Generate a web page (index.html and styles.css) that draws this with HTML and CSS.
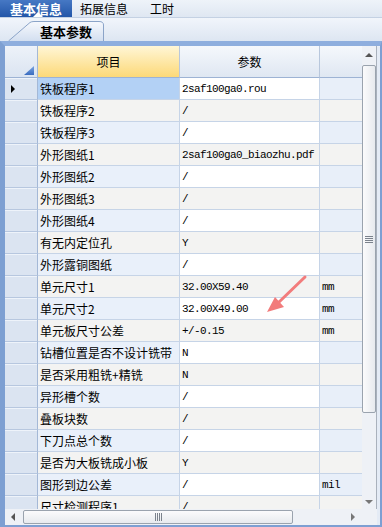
FILE: index.html
```html
<!DOCTYPE html>
<html lang="zh-CN">
<head>
<meta charset="UTF-8">
<meta name="viewport" content="width=device-width, initial-scale=1.0">
<title>基本信息</title>
<link rel="stylesheet" href="styles.css">
</head>
<body>

<div class="app">
    <div class="tabs">
        <div class="tab active">基本信息</div>
        <div class="tab second">拓展信息</div>
        <div class="tab third">工时</div>
    </div>

    <div class="subtabs">
        <div class="subtab">
            <svg class="subtab-shape" width="96" height="20" viewBox="0 0 96 20">
                <defs>
                    <linearGradient id="tabFill" x1="0" y1="0" x2="0" y2="1">
                        <stop offset="0" stop-color="#f7f9fd"/>
                        <stop offset="1" stop-color="#d3dff0"/>
                    </linearGradient>
                </defs>
                <path d="M0.5 20 L22 1.5 Q23.5 0.5 26 0.5 L91 0.5 Q95.5 0.5 95.5 4 L95.5 20" fill="url(#tabFill)" stroke="#8ba4c8"/>
            </svg>
            <span class="subtab-label">基本参数</span>
        </div>
    </div>

    <div class="frame">
        <div class="frame-body">
            <div class="grid">
                <div class="row head">
                    <div class="cell rh corner"></div>
                    <div class="cell hd active-col">项目</div>
                    <div class="cell hd">参数</div>
                    <div class="cell hd last"></div>
                </div>
                <div class="row even current">
                    <div class="cell rh"><span class="pointer"></span></div>
                    <div class="cell name">铁板程序1</div>
                    <div class="cell val">2saf100ga0.rou</div>
                    <div class="cell unit"></div>
                </div>
                <div class="row odd">
                    <div class="cell rh"></div>
                    <div class="cell name">铁板程序2</div>
                    <div class="cell val">/</div>
                    <div class="cell unit"></div>
                </div>
                <div class="row even">
                    <div class="cell rh"></div>
                    <div class="cell name">铁板程序3</div>
                    <div class="cell val">/</div>
                    <div class="cell unit"></div>
                </div>
                <div class="row odd">
                    <div class="cell rh"></div>
                    <div class="cell name">外形图纸1</div>
                    <div class="cell val">2saf100ga0_biaozhu.pdf</div>
                    <div class="cell unit"></div>
                </div>
                <div class="row even">
                    <div class="cell rh"></div>
                    <div class="cell name">外形图纸2</div>
                    <div class="cell val">/</div>
                    <div class="cell unit"></div>
                </div>
                <div class="row odd">
                    <div class="cell rh"></div>
                    <div class="cell name">外形图纸3</div>
                    <div class="cell val">/</div>
                    <div class="cell unit"></div>
                </div>
                <div class="row even">
                    <div class="cell rh"></div>
                    <div class="cell name">外形图纸4</div>
                    <div class="cell val">/</div>
                    <div class="cell unit"></div>
                </div>
                <div class="row odd">
                    <div class="cell rh"></div>
                    <div class="cell name">有无内定位孔</div>
                    <div class="cell val">Y</div>
                    <div class="cell unit"></div>
                </div>
                <div class="row even">
                    <div class="cell rh"></div>
                    <div class="cell name">外形露铜图纸</div>
                    <div class="cell val">/</div>
                    <div class="cell unit"></div>
                </div>
                <div class="row odd">
                    <div class="cell rh"></div>
                    <div class="cell name">单元尺寸1</div>
                    <div class="cell val">32.00X59.40</div>
                    <div class="cell unit">mm</div>
                </div>
                <div class="row even">
                    <div class="cell rh"></div>
                    <div class="cell name">单元尺寸2</div>
                    <div class="cell val">32.00X49.00</div>
                    <div class="cell unit">mm</div>
                </div>
                <div class="row odd">
                    <div class="cell rh"></div>
                    <div class="cell name">单元板尺寸公差</div>
                    <div class="cell val">+/-0.15</div>
                    <div class="cell unit">mm</div>
                </div>
                <div class="row even">
                    <div class="cell rh"></div>
                    <div class="cell name">钻槽位置是否不设计铣带</div>
                    <div class="cell val">N</div>
                    <div class="cell unit"></div>
                </div>
                <div class="row odd">
                    <div class="cell rh"></div>
                    <div class="cell name">是否采用粗铣+精铣</div>
                    <div class="cell val">N</div>
                    <div class="cell unit"></div>
                </div>
                <div class="row even">
                    <div class="cell rh"></div>
                    <div class="cell name">异形槽个数</div>
                    <div class="cell val">/</div>
                    <div class="cell unit"></div>
                </div>
                <div class="row odd">
                    <div class="cell rh"></div>
                    <div class="cell name">叠板块数</div>
                    <div class="cell val">/</div>
                    <div class="cell unit"></div>
                </div>
                <div class="row even">
                    <div class="cell rh"></div>
                    <div class="cell name">下刀点总个数</div>
                    <div class="cell val">/</div>
                    <div class="cell unit"></div>
                </div>
                <div class="row odd">
                    <div class="cell rh"></div>
                    <div class="cell name">是否为大板铣成小板</div>
                    <div class="cell val">Y</div>
                    <div class="cell unit"></div>
                </div>
                <div class="row even">
                    <div class="cell rh"></div>
                    <div class="cell name">图形到边公差</div>
                    <div class="cell val">/</div>
                    <div class="cell unit">mil</div>
                </div>
                <div class="row odd">
                    <div class="cell rh"></div>
                    <div class="cell name">尺寸检测程序1</div>
                    <div class="cell val">/</div>
                    <div class="cell unit"></div>
                </div>
            </div>

            <div class="vscroll">
                <div class="sb-btn"><span class="arrow-up"></span></div>
                <div class="sb-thumb v"><span class="grip-v"></span></div>
                <div class="sb-track"></div>
                <div class="sb-btn"><span class="arrow-down"></span></div>
            </div>
        </div>

        <div class="frame-foot">
            <div class="hscroll">
                <div class="sb-btn h"><span class="arrow-left"></span></div>
                <div class="sb-thumb h"><span class="grip-h"></span></div>
                <div class="sb-track"></div>
                <div class="sb-btn h"><span class="arrow-right"></span></div>
            </div>
            <div class="sb-corner"></div>
        </div>
    </div>

    <!-- red annotation arrow drawn over the grid -->
    <svg class="marker" width="382" height="527" viewBox="0 0 382 527">
        <line x1="305" y1="277" x2="278" y2="303" stroke="#f27c7c" stroke-width="3" stroke-linecap="round"/>
        <polygon points="267,312 275,297 284,307" fill="#f27c7c"/>
    </svg>
</div>

</body>
</html>
```

FILE: styles.css
```css
body {
    margin: 0;
    padding: 0;
    background: #ffffff;
    font-family: "Noto Sans CJK SC", "Noto Sans", sans-serif;
    font-size: 12px;
    color: #000;
}

.app {
    position: relative;
    width: 382px;
    height: 527px;
    overflow: hidden;
}

/* top tab strip */
.tabs {
    display: flex;
    height: 18px;
    background: linear-gradient(to bottom, #eef3f9, #dfe7f2);
    border-bottom: 1px solid #c4d1e3;
    box-sizing: border-box;
}

.tab {
    display: flex;
    align-items: center;
    height: 17px;
    font-size: 12px;
    line-height: 12px;
    padding: 0 11px;
}

.tab.active {
    position: relative;
    width: 72px;
    box-sizing: border-box;
    justify-content: center;
    padding: 0;
    font-size: 13px;
    font-weight: bold;
    color: #fff;
    background: linear-gradient(to bottom, #4678c4, #2356a8);
}

.tab.active:after {
    content: "";
    position: absolute;
    left: 33px;
    bottom: 0;
    border-left: 5px solid transparent;
    border-right: 5px solid transparent;
    border-bottom: 5px solid #fff;
}

.tab.second {
    padding-left: 8px;
}

/* second tab strip */
.subtabs {
    display: flex;
    align-items: flex-end;
    height: 23px;
    padding-left: 8px;
    background: linear-gradient(to bottom, #f1f5fb, #dde6f2);
}

.subtab {
    position: relative;
    width: 96px;
    height: 20px;
}

.subtab-shape {
    position: absolute;
    left: 0;
    top: 0;
}

.subtab-label {
    position: relative;
    display: block;
    padding-left: 32px;
    font-size: 13px;
    font-weight: bold;
    line-height: 21px;
}

/* grid frame */
.frame {
    height: 486px;
    box-sizing: border-box;
    border-style: solid;
    border-color: #7d9fd2;
    border-width: 5px 2px 2px 5px;
    border-top-color: #8eaede;
    box-shadow: inset 0 1px 0 #e9eff8;
    background: #e4ebf5;
    padding-right: 3px;
}

.frame-body {
    display: flex;
    height: 463px;
}

.grid {
    width: 357px;
    height: 463px;
    overflow: hidden;
    background: #fff;
}

.row {
    display: grid;
    grid-template-columns: 33px 142px 140px 42px;
    height: 22px;
}

.row.head {
    height: 32px;
}

.cell {
    box-sizing: border-box;
    border-right: 1px solid #c6d4e7;
    border-bottom: 1px solid #c6d4e7;
    padding-left: 2px;
    display: flex;
    align-items: center;
    white-space: nowrap;
    overflow: hidden;
}

.hd {
    justify-content: center;
    padding-left: 0;
    font-size: 12px;
    background: linear-gradient(to bottom, #f5f8fc, #dfe7f2);
    border-right-color: #b8c7dc;
    border-bottom-color: #9db3d4;
}

.hd.active-col {
    background: linear-gradient(to bottom, #fff6d6, #fcd978);
}

.hd.last {
    border-right: none;
}

.rh {
    position: relative;
    padding-left: 0;
    background: #dbe4f1;
    border-right-color: #a4b8d6;
    border-bottom-color: #b7c7df;
    box-shadow: inset 0 1px 0 #eef3fa;
}

.rh.corner {
    background: linear-gradient(to bottom, #edf2f9, #dbe4f1);
    border-bottom-color: #9db3d4;
}

.rh.corner:after {
    content: "";
    position: absolute;
    right: 3px;
    bottom: 2px;
    width: 10px;
    height: 9px;
    background: linear-gradient(to bottom, #7aa4e0, #3a6cc0);
    clip-path: polygon(100% 0, 100% 100%, 0 100%);
}

.pointer {
    margin-left: 6px;
    border-top: 4px solid transparent;
    border-bottom: 4px solid transparent;
    border-left: 4px solid #000;
}

.name {
    font-size: 12px;
}

.val,
.unit {
    font-family: "Liberation Mono", "DejaVu Sans Mono", monospace;
    font-size: 11px;
    letter-spacing: -0.6px;
}

.unit {
    border-right: none;
}

.row.even .name { background: #e9f0fa; }
.row.even .val { background: #ffffff; }
.row.even .unit { background: #e8eff9; }

.row.odd .name,
.row.odd .val,
.row.odd .unit {
    background: #f3f3f2;
}

.row.current .name {
    background: #b3d1f5;
}

/* scrollbars */
.vscroll {
    display: flex;
    flex-direction: column;
    width: 15px;
    height: 463px;
    box-sizing: border-box;
    background: #eef1f6;
    border-right: 1px solid #a9b1bc;
}

.sb-btn {
    display: flex;
    align-items: center;
    justify-content: center;
    height: 18px;
    flex: none;
}

.sb-btn.h {
    width: 18px;
    height: auto;
}

.sb-track {
    flex: 1;
}

.sb-thumb {
    flex: none;
    display: flex;
    align-items: center;
    justify-content: center;
    box-sizing: border-box;
    border: 1px solid #9aa3ae;
    border-radius: 2px;
}

.sb-thumb.v {
    height: 348px;
    margin-top: 1px;
    background: linear-gradient(to right, #fbfbfc, #e7eaee);
}

.sb-thumb.h {
    width: 270px;
    margin: 1px 0;
    background: linear-gradient(to bottom, #fbfbfc, #e7eaee);
}

.grip-v {
    width: 8px;
    height: 7px;
    background: repeating-linear-gradient(to bottom, #7b828c 0, #7b828c 1px, transparent 1px, transparent 2px);
}

.grip-h {
    width: 7px;
    height: 8px;
    background: repeating-linear-gradient(to right, #7b828c 0, #7b828c 1px, transparent 1px, transparent 2px);
}

.arrow-up {
    border-left: 4px solid transparent;
    border-right: 4px solid transparent;
    border-bottom: 4px solid #555;
}

.arrow-down {
    margin-top: 4px;
    border-left: 4px solid transparent;
    border-right: 4px solid transparent;
    border-top: 4px solid #777;
}

.arrow-left {
    margin-left: -2px;
    border-top: 4px solid transparent;
    border-bottom: 4px solid transparent;
    border-right: 4px solid #555;
}

.arrow-right {
    border-top: 4px solid transparent;
    border-bottom: 4px solid transparent;
    border-left: 4px solid #777;
}

.frame-foot {
    display: flex;
    height: 16px;
}

.hscroll {
    display: flex;
    width: 357px;
    background: #eef1f6;
}

.sb-corner {
    width: 15px;
    background: #eef1f6;
}

.marker {
    position: absolute;
    left: 0;
    top: 0;
    pointer-events: none;
}
```
